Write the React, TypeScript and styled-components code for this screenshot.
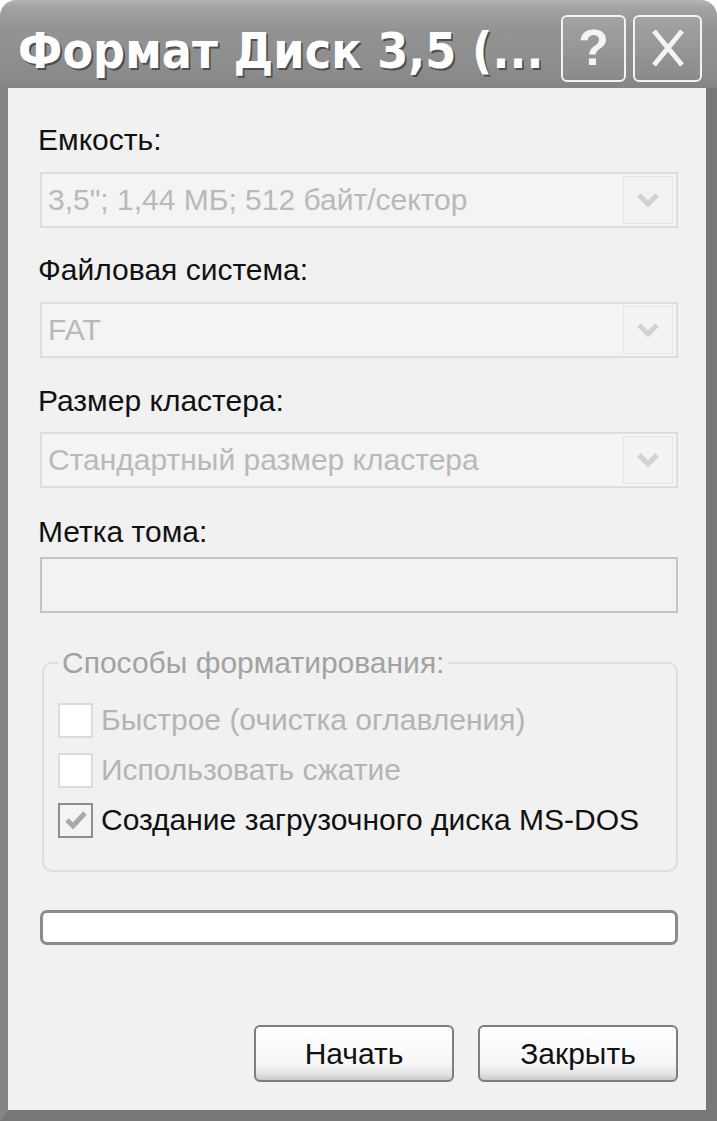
import { FC } from "react";
import styled, { createGlobalStyle } from "styled-components";

const GlobalStyle = createGlobalStyle`
  html, body {
    margin: 0;
    padding: 0;
    background: #ffffff;
  }
  body {
    font-family: "Liberation Sans", Arial, sans-serif;
  }
`;

const Window = styled.div`
  width: 717px;
  height: 1121px;
  display: flex;
  flex-direction: column;
`;

const TitleBar = styled.div`
  height: 88px;
  flex-shrink: 0;
  display: flex;
  align-items: center;
  gap: 7px;
  padding: 8px 15px 0 18px;
  box-sizing: border-box;
  border-radius: 16px 16px 0 0;
  background: linear-gradient(
    to bottom,
    #b4b4b4 0px,
    #a2a2a2 8px,
    #939393 30px,
    #8c8c8c 70px,
    #848484 88px
  );
`;

const Title = styled.div`
  flex: 1;
  min-width: 0;
  margin-top: 6px;
  color: #ffffff;
  font-family: "DejaVu Sans", "Liberation Sans", sans-serif;
  font-weight: bold;
  font-size: 50px;
  white-space: nowrap;
  text-shadow: 2px 2px 0 #4e4e4e;
  transform: scaleX(0.895);
  transform-origin: left center;
`;

const CaptionButton = styled.div<{ $w: number }>`
  flex-shrink: 0;
  width: ${(p) => p.$w}px;
  height: 67px;
  box-sizing: border-box;
  border: 2px solid #f2f2f2;
  border-radius: 6px;
  background: linear-gradient(to bottom, #a3a3a3, #8a8a8a);
  display: flex;
  align-items: center;
  justify-content: center;
  color: #f4f4f4;
  font-family: "Liberation Sans", Arial, sans-serif;
  font-weight: bold;
  font-size: 50px;
`;

const Body = styled.div`
  flex: 1;
  display: flex;
  flex-direction: column;
  background: #f1f1f1;
  border-left: 8px solid #858585;
  border-right: 11px solid #777777;
  border-bottom: 11px solid #777777;
  padding: 35px 28px 28px 30px;
`;

const Label = styled.div<{ $gap: number; $top?: number }>`
  height: 34px;
  line-height: 34px;
  font-size: 30px;
  color: #111111;
  margin-top: ${(p) => p.$top ?? 0}px;
  margin-bottom: ${(p) => p.$gap}px;
  white-space: nowrap;
`;

const Combo = styled.div`
  margin-left: 2px;
  height: 56px;
  box-sizing: border-box;
  border: 2px solid #dddddd;
  background: #f4f4f4;
  display: flex;
  align-items: center;
  padding: 0 3px 0 6px;
`;

const ComboText = styled.span`
  flex: 1;
  font-size: 30px;
  color: #b9b9b9;
  white-space: nowrap;
`;

const DropButton = styled.div`
  width: 50px;
  height: 48px;
  box-sizing: border-box;
  border: 1px solid #e4e4e4;
  background: #f3f3f3;
  display: flex;
  align-items: center;
  justify-content: center;
`;

const TextBox = styled.div`
  margin-left: 2px;
  height: 56px;
  box-sizing: border-box;
  border: 2px solid #c4c4c4;
  background: #f2f2f2;
`;

const Group = styled.fieldset`
  margin: 33px 0 0 4px;
  padding: 15px 14px 25px 14px;
  border: 2px solid #dedede;
  border-radius: 10px;
  display: flex;
  flex-direction: column;
`;

const Legend = styled.legend`
  padding: 0 4px;
  height: 34px;
  line-height: 34px;
  font-size: 30px;
  color: #a2a2a2;
`;

const CheckRow = styled.div`
  height: 50px;
  display: flex;
  align-items: center;
  gap: 8px;
`;

const Box = styled.div<{ $checked?: boolean }>`
  width: 35px;
  height: 35px;
  box-sizing: border-box;
  border: 2px solid ${(p) => (p.$checked ? "#8e8e8e" : "#dcdcdc")};
  background: ${(p) => (p.$checked ? "#f4f4f4" : "#ffffff")};
  display: flex;
  align-items: center;
  justify-content: center;
`;

const CheckText = styled.span<{ $disabled?: boolean }>`
  font-size: 30px;
  color: ${(p) => (p.$disabled ? "#b4b4b4" : "#111111")};
  white-space: nowrap;
`;

const Progress = styled.div`
  margin: 38px 0 0 2px;
  height: 35px;
  box-sizing: border-box;
  border: 3px solid #8c8c8c;
  border-radius: 7px;
  background: #ffffff;
`;

const ButtonRow = styled.div`
  margin-top: auto;
  display: flex;
  justify-content: flex-end;
  gap: 24px;
`;

const Button = styled.div`
  width: 200px;
  height: 57px;
  box-sizing: border-box;
  border: 2px solid #7e7e7e;
  border-radius: 6px;
  background: linear-gradient(to bottom, #ffffff 0%, #f7f7f7 70%, #e4e4e4 88%, #c9c9c9 100%);
  display: flex;
  align-items: center;
  justify-content: center;
  font-size: 30px;
  color: #111111;
`;

const Chevron: FC = () => (
  <svg width="24" height="16" viewBox="0 0 24 16">
    <path d="M3 3 L12 12 L21 3" fill="none" stroke="#d2d2d2" strokeWidth="5" />
  </svg>
);

const CloseGlyph: FC = () => (
  <svg width="40" height="44" viewBox="0 0 40 44">
    <path d="M6 5 L34 39 M34 5 L6 39" stroke="#f4f4f4" strokeWidth="5" />
  </svg>
);

const CheckGlyph: FC = () => (
  <svg width="24" height="22" viewBox="0 0 24 22">
    <path d="M3 11 L9 17 L21 4" fill="none" stroke="#a9a9a9" strokeWidth="5" />
  </svg>
);

const ComboBox: FC<{ value: string }> = ({ value }) => (
  <Combo>
    <ComboText>{value}</ComboText>
    <DropButton>
      <Chevron />
    </DropButton>
  </Combo>
);

const options = [
  { text: "Быстрое (очистка оглавления)", checked: false, disabled: true },
  { text: "Использовать сжатие", checked: false, disabled: true },
  { text: "Создание загрузочного диска MS-DOS", checked: true, disabled: false },
];

const App: FC = () => (
  <>
    <GlobalStyle />
    <Window>
      <TitleBar>
        <Title>Формат Диск 3,5 (...</Title>
        <CaptionButton $w={65}>?</CaptionButton>
        <CaptionButton $w={69}>
          <CloseGlyph />
        </CaptionButton>
      </TitleBar>
      <Body>
        <Label $gap={15}>Емкость:</Label>
        <ComboBox value={'3,5"; 1,44 МБ; 512 байт/сектор'} />
        <Label $top={25} $gap={15}>
          Файловая система:
        </Label>
        <ComboBox value="FAT" />
        <Label $top={26} $gap={14}>
          Размер кластера:
        </Label>
        <ComboBox value="Стандартный размер кластера" />
        <Label $top={27} $gap={8}>
          Метка тома:
        </Label>
        <TextBox />
        <Group>
          <Legend>Способы форматирования:</Legend>
          {options.map((o) => (
            <CheckRow key={o.text}>
              <Box $checked={o.checked}>{o.checked && <CheckGlyph />}</Box>
              <CheckText $disabled={o.disabled}>{o.text}</CheckText>
            </CheckRow>
          ))}
        </Group>
        <Progress />
        <ButtonRow>
          <Button>Начать</Button>
          <Button>Закрыть</Button>
        </ButtonRow>
      </Body>
    </Window>
  </>
);

export default App;
